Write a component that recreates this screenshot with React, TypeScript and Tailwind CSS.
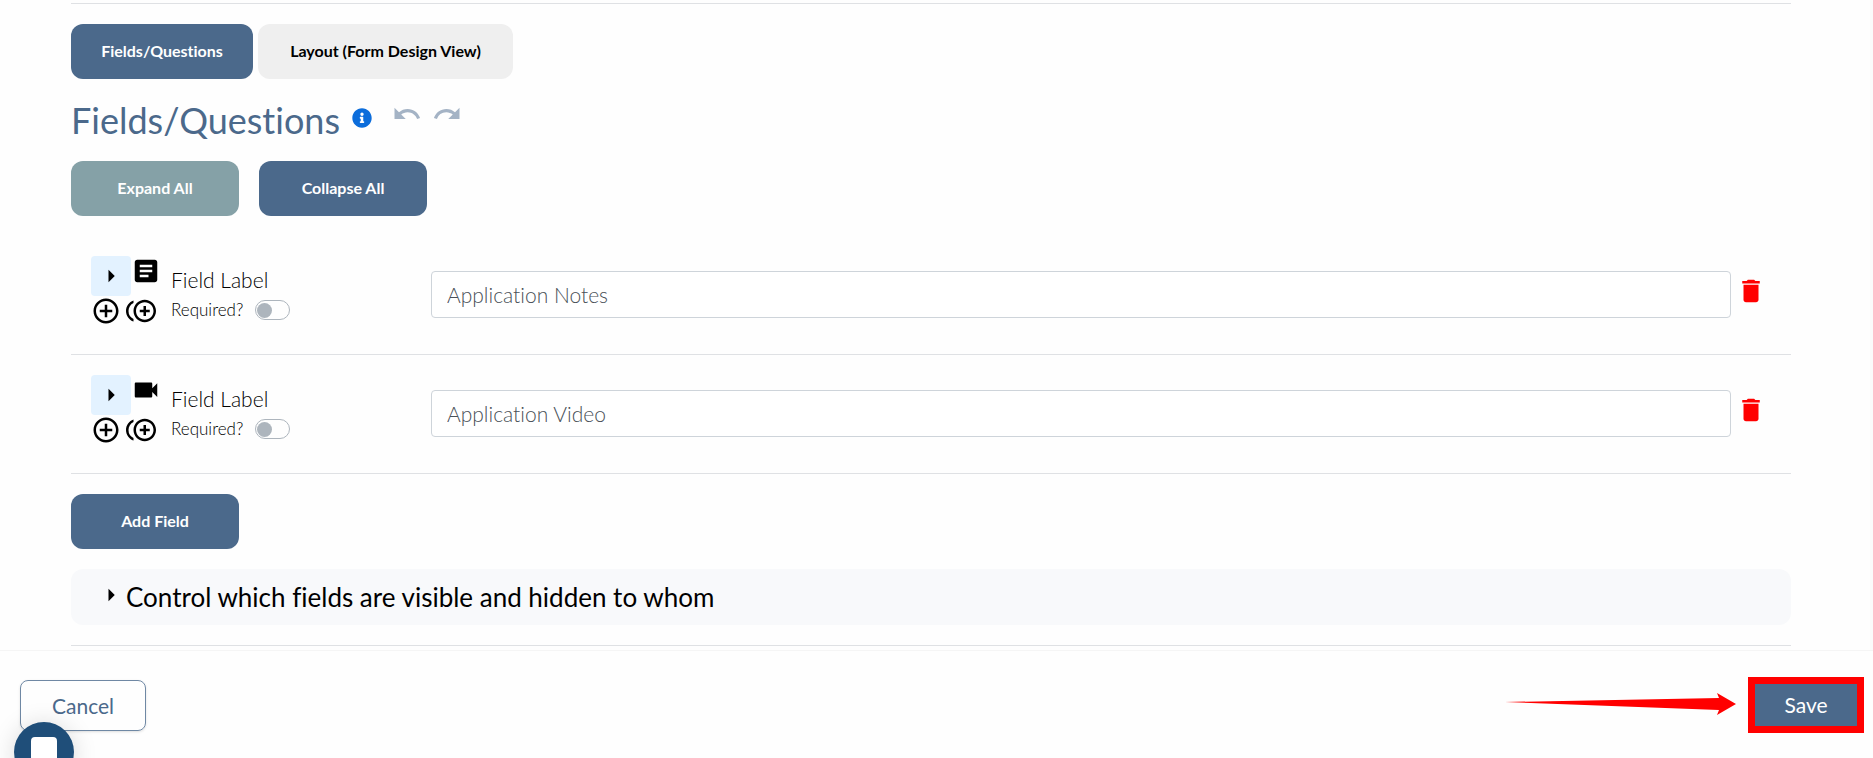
import type { IconType } from "react-icons"
import { FaInfoCircle } from "react-icons/fa"
import {
  MdArrowRight,
  MdArticle,
  MdControlPoint,
  MdControlPointDuplicate,
  MdDelete,
  MdRedo,
  MdUndo,
  MdVideocam,
} from "react-icons/md"

type Field = {
  id: string
  value: string
  icon: IconType
}

const fields: Field[] = [
  { id: "notes", value: "Application Notes", icon: MdArticle },
  { id: "video", value: "Application Video", icon: MdVideocam },
]

function FieldRow({ field }: { field: Field }) {
  const TypeIcon = field.icon

  return (
    <div className="flex items-start border-b border-[#dfe1e4] pt-5 pr-[25px] pb-7 pl-5">
      <div className="w-20 shrink-0">
        <div className="flex items-start">
          <button
            type="button"
            aria-label="Expand field"
            className="flex size-10 items-center justify-center rounded bg-[#e3f2ff]"
          >
            <MdArrowRight size={30} />
          </button>
          <TypeIcon size={30} />
        </div>
        <div className="flex gap-[5px]">
          <button type="button" aria-label="Add field below">
            <MdControlPoint size={30} />
          </button>
          <button type="button" aria-label="Duplicate field">
            <MdControlPointDuplicate size={30} />
          </button>
        </div>
      </div>
      <div className="w-[260px] shrink-0 pt-[9px] font-light">
        <label htmlFor={field.id} className="block text-[21px] leading-[30px]">
          Field Label
        </label>
        <div className="flex items-center gap-3 pt-[5px]">
          <label
            htmlFor={`${field.id}-required`}
            className="text-[17px] leading-5"
          >
            Required?
          </label>
          <input
            id={`${field.id}-required`}
            type="checkbox"
            className="flex h-5 w-[35px] appearance-none items-center rounded-full border border-[#adb5bd] px-px before:size-[15px] before:rounded-full before:bg-[#adb5bd]"
          />
        </div>
      </div>
      <input
        id={field.id}
        type="text"
        defaultValue={field.value}
        className="mt-[15px] h-[47px] min-w-0 flex-1 rounded border border-[#ced4da] bg-white px-[15px] text-[21px] font-light text-[#495057]"
      />
      <button
        type="button"
        aria-label="Delete field"
        className="mt-5 ml-[5px] text-[#ff0000]"
      >
        <MdDelete size={30} />
      </button>
    </div>
  )
}

function App() {
  return (
    <div className="flex min-h-screen flex-col bg-[#fefefe] font-['Lato',sans-serif] text-black [font-variant-ligatures:none]">
      <main className="flex-1 border-r-3 border-[#fafafa] pt-[3px] pr-[79px] pb-1 pl-[71px]">
        <hr className="border-[#dfe1e4]" />

        <div className="mt-5 flex gap-[5px] text-base font-bold">
          <button
            type="button"
            className="h-[55px] w-[182px] rounded-xl bg-[#4b698b] pb-0.5 text-white"
          >
            Fields/Questions
          </button>
          <button
            type="button"
            className="h-[55px] w-[255px] rounded-xl bg-[#efefef] pb-0.5"
          >
            Layout (Form Design View)
          </button>
        </div>

        <div className="mt-5 flex h-[42px] items-start">
          <h1 className="text-[36px] leading-[42px] text-[#4b698b]">
            Fields/Questions
          </h1>
          <FaInfoCircle size={20} className="mt-[9px] ml-3 text-[#0c6ddb]" />
          <div className="ml-5 flex gap-2.5 text-[#a4b3c5]">
            <button type="button" aria-label="Undo">
              <MdUndo size={30} />
            </button>
            <button type="button" aria-label="Redo">
              <MdRedo size={30} />
            </button>
          </div>
        </div>

        <div className="mt-5 flex gap-5 text-base font-bold text-white">
          <button type="button" className="h-[55px] w-[168px] rounded-xl bg-[#85a1a7] pb-0.5">
            Expand All
          </button>
          <button type="button" className="h-[55px] w-[168px] rounded-xl bg-[#4b698b] pb-0.5">
            Collapse All
          </button>
        </div>

        <div className="mt-5">
          {fields.map((field) => (
            <FieldRow key={field.id} field={field} />
          ))}
        </div>

        <button
          type="button"
          className="mt-5 h-[55px] w-[168px] rounded-xl bg-[#4b698b] pb-0.5 text-base font-bold text-white"
        >
          Add Field
        </button>

        <button
          type="button"
          className="mt-5 flex h-14 w-full items-center rounded-xl bg-[#f8f9fb] pl-[25px] text-[26px]"
        >
          <MdArrowRight size={30} className="mb-1" />
          Control which fields are visible and hidden to whom
        </button>

        <hr className="mt-5 border-[#dfe1e4]" />
      </main>

      <footer className="flex h-[108px] items-start justify-between border-t border-[#f5f5f5] pt-[26px] pr-[9px] pl-5">
        <button
          type="button"
          className="mt-[3px] h-[51px] w-[126px] rounded-lg border border-[#6f88a4] text-[21px] text-[#4b698b] shadow-sm"
        >
          Cancel
        </button>
        <div className="flex items-center gap-3">
          <svg width="231" height="26" viewBox="0 0 231 26" fill="#ff0000" aria-hidden="true">
            <path d="M0 10 L214 6 L212 1 L231 12 L212 23 L214 18 Z" />
          </svg>
          <button
            type="button"
            className="h-14 w-[116px] border-7 border-[#ff0000] bg-[#4b698b] text-[21px] text-white"
          >
            Save
          </button>
        </div>
      </footer>

      <button
        type="button"
        aria-label="Open chat"
        className="fixed -bottom-6 left-3.5 flex size-15 items-center justify-center rounded-full bg-[#1f4e79] shadow-[0_2px_24px_rgba(0,0,0,0.15)]"
      >
        <svg width="26" height="30" viewBox="0 0 26 30" fill="#ffffff" aria-hidden="true">
          <path d="M4 0 H22 Q26 0 26 4 V30 L18 26 H4 Q0 26 0 22 V4 Q0 0 4 0 Z" />
        </svg>
      </button>
    </div>
  )
}

export default App
